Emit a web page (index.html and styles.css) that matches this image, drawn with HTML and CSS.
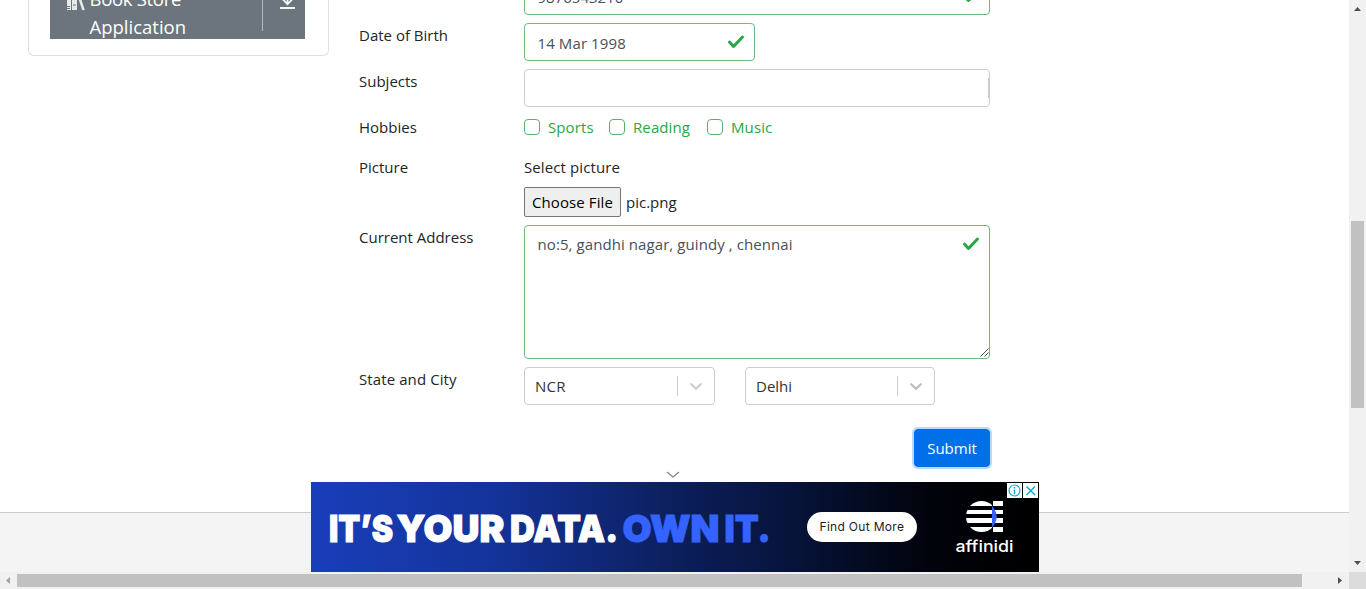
FILE: index.html
```html
<!DOCTYPE html>
<html lang="en">
<head>
<meta charset="utf-8">
<title>Practice Form</title>
<link rel="stylesheet" href="styles.css">
</head>
<body>
<div class="window">
  <div class="viewport">
    <main class="content">
      <aside class="sidebar">
        <div class="menu-item">
          <svg class="book-icon" width="19" height="24" viewBox="0 0 19 24"><path d="M1 2h4v19H1zM6 3h5v18H6z" fill="#e7e8ea"/><path d="M1 17.500h3M1 19.500h3M7 16h3M5.500 2v19" stroke="#6c757d"/><path d="M11 3l6 18M14 9l4 12" stroke="#e7e8ea" stroke-width="1.600"/></svg>
          <span class="menu-text"><span class="tight">Book Store</span> Application</span>
          <span class="menu-line"></span>
          <svg class="down-icon" width="17" height="24" viewBox="0 0 17 24"><path d="M8.500 5v12M3 11.500l5.500 5.700 5.500-5.700M1 21h15" fill="none" stroke="#f4f5f5" stroke-width="1.800"/></svg>
        </div>
      </aside>
      <form class="form">
        <div class="row"><span class="label"></span><div class="control valid"><span class="v-phone">9876543210</span><svg class="check" width="18" height="16" viewBox="0 0 18 16"><path d="M2.500 8l4 4.500L15.500 3" /></svg></div></div>
        <div class="row"><span class="label">Date of Birth</span><div class="control valid date"><span class="v-date">14 Mar 1998</span><svg class="check" width="18" height="16" viewBox="0 0 18 16"><path d="M2.500 8l4 4.500L15.500 3" /></svg></div></div>
        <div class="row"><span class="label">Subjects</span><div class="control subjects"><i class="cursor"></i></div></div>
        <div class="row hobbies"><span class="label">Hobbies</span><div class="checks"><label class="sports"><i class="box"></i><span>Sports</span></label><label class="reading"><i class="box"></i><span>Reading</span></label><label><i class="box"></i><span>Music</span></label></div></div>
        <div class="row"><span class="label">Picture</span><div class="upload"><span class="label wide">Select picture</span><div class="file"><span class="choose">Choose File</span><span class="file-name">pic.png</span></div></div></div>
        <div class="row"><span class="label">Current Address</span><div class="control valid address"><span class="v-address">no:5, gandhi nagar, guindy , chennai</span><svg class="check" width="18" height="16" viewBox="0 0 18 16"><path d="M2.500 8l4 4.500L15.500 3" /></svg><svg class="grip" width="9" height="9" viewBox="0 0 9 9"><path d="M.500 8.500l8-8M4.500 8.500l4-4" stroke="#555" stroke-width="1" fill="none"/></svg></div></div>
        <div class="row"><span class="label wide">State and City</span><div class="selects">
          <div class="select"><span class="ncr">NCR</span><i></i><svg width="12" height="8" viewBox="0 0 12 8"><path d="M1.200 1.200L6 5.800l4.800-4.600"/></svg></div>
          <div class="select"><span>Delhi</span><i></i><svg class="dim" width="12" height="8" viewBox="0 0 12 8"><path d="M1.200 1.200L6 5.800l4.800-4.600"/></svg></div>
        </div></div>
        <div class="actions"><button class="submit" type="button">Submit</button></div>
      </form>
    </main>
    <footer class="footer"></footer>
    <div class="ad">
      <svg class="collapse" width="14" height="8" viewBox="0 0 14 8"><path d="M1 1l6 5 6-5" fill="none" stroke="#858585" stroke-width="1.300"/></svg>
      <svg class="banner" width="728" height="90" viewBox="0 0 728 90">
        <defs>
          <linearGradient id="night"><stop offset="0" stop-color="#193eba"/><stop offset=".25" stop-color="#14339a"/><stop offset=".5" stop-color="#0c1f5d"/><stop offset=".7" stop-color="#051031"/><stop offset=".85" stop-color="#01030b"/><stop offset="1" stop-color="#000"/></linearGradient>
          <clipPath id="disc"><circle cx="670.500" cy="34.500" r="15.500"/></clipPath>
        </defs>
        <path d="M0 0h728v90H0z" fill="url(#night)"/>
        <g class="headline">
          <text x="18" y="59.500" textLength="64" lengthAdjust="spacingAndGlyphs">IT’S</text>
          <text x="85.500" y="59.500" textLength="108" lengthAdjust="spacingAndGlyphs">YOUR</text>
          <text x="199" y="59.500" textLength="108" lengthAdjust="spacingAndGlyphs">DATA.</text>
          <g class="own"><text x="311.500" y="59.500" textLength="97" lengthAdjust="spacingAndGlyphs">OWN</text>
          <text x="413.500" y="59.500" textLength="46" lengthAdjust="spacingAndGlyphs">IT.</text></g>
        </g>
        <rect x="496" y="30" width="110" height="30" rx="15" fill="#fff"/>
        <text class="more" x="508.500" y="49" textLength="84.500" lengthAdjust="spacing">Find Out More</text>
        <g fill="#fff"><g clip-path="url(#disc)"><path d="M650 19h31v5h-31zM650 28h31v4h-31zM650 36h31v5h-31zM650 45h31v5h-31z"/></g><path d="M682 19h10v5h-10zM682 28h10v4h-10zM682 36h10v5h-10zM682 45h10v5h-10z"/></g>
        <path d="M681 24q9.500 10.500 0 21.500z" fill="#3563ff"/>
        <text class="brand" x="644.500" y="70" textLength="58" lengthAdjust="spacingAndGlyphs">affinidi</text>
        <path d="M696 1h15v15h-15zM712 1h15v15h-15z" fill="#fff"/>
        <g fill="none" stroke="#08aed2" stroke-width="1.200"><circle cx="703.500" cy="8.500" r="5.500"/><path d="M703.500 7.500v4.500M703.500 5v1.500" stroke-width="1.500"/><path d="M715.500 4.500l8.500 8.500M724 4.500l-8.500 8.500" stroke-width="1.500"/></g>
      </svg>
    </div>
  </div>
  <div class="vbar"><svg width="7" height="4" viewBox="0 0 7 4"><path d="M0 4h7L3.500 0z" fill="#505050"/></svg><i></i><svg width="7" height="4" viewBox="0 0 7 4"><path d="M0 0h7L3.500 4z" fill="#505050"/></svg></div>
  <div class="hbar"><svg width="4" height="7" viewBox="0 0 4 7"><path d="M4 0v7L0 3.500z" fill="#a3a3a3"/></svg><i></i><svg width="4" height="7" viewBox="0 0 4 7"><path d="M0 0v7l4-3.500z" fill="#505050"/></svg></div>
  <div class="corner"></div>
</div>
</body>
</html>
```
FILE: styles.css
```css
* { box-sizing: border-box; }
body { margin: 0; overflow: hidden; background: #fff; color: #212529; font: 15px/24px "Open Sans", "Noto Sans", sans-serif; }
svg { display: block; flex: none; }
.window { display: grid; width: 1366px; height: 589px; grid-template: 572px 17px / 1349px 17px; }
.viewport { position: relative; display: flex; flex-direction: column; overflow: hidden; }
.content { display: flex; height: 512px; flex: none; align-items: flex-start; gap: 30px; padding-left: 28px; }
.sidebar { width: 301px; height: 76px; margin-top: -20px; padding: 0 23px 16px 21px; border: 1px solid #dfdfdf; border-top: 0; border-radius: 0 0 6px 6px; }
.menu-item { display: flex; height: 59px; padding: 4px 9px 0 16px; background: #6c757d; color: #fff; }
.book-icon { margin-top: 5px; }
.menu-text { width: 178px; margin: 1px 0 0 4.500px; padding-right: 50px; font-size: 18.500px; line-height: 28px; }
.tight { letter-spacing: -.3px; }
.menu-line { width: 1px; height: 47px; margin-right: 16px; background: #b6babe; margin-left: -4.500px; }
.down-icon { margin-top: 3px; }
.form { display: flex; width: 631px; margin-top: -23px; flex-direction: column; gap: 8px; }
.row { display: grid; grid-template-columns: 165px 466px; }
.label { white-space: nowrap; }
.wide { letter-spacing: .1px; }
.control { display: flex; position: relative; height: 38px; padding: 6px 9px 6px 12.500px; align-items: flex-start; justify-content: space-between; border: 1px solid #ccc; border-radius: 4px; color: #495057; white-space: nowrap; }
.valid { border-color: #6dba7e; }
.date { width: 231px; }
.v-phone, .v-date { padding-top: 1px; }
.v-date { letter-spacing: .1px; }
.v-address { letter-spacing: .08px; }
.check { margin-top: 4px; fill: none; stroke: #28a745; stroke-width: 3; stroke-linecap: round; stroke-linejoin: round; }
.subjects { justify-content: flex-end; padding-right: 0; }
.cursor { width: 1px; height: 20px; margin-top: 2px; background: #ccc; }
.hobbies { height: 32px; }
.checks { display: flex; gap: 16px; color: #28a745; letter-spacing: .1px; }
.checks label { display: flex; gap: 8px; }
.checks .sports { width: 69px; }
.checks .reading { width: 82px; }
.box { flex: none; width: 16px; height: 16px; margin-top: 4px; border: 1px solid #58b26e; border-radius: 4px; }
.upload { display: flex; flex-direction: column; gap: 8px; }
.file { display: flex; height: 30px; gap: 5px; line-height: 30px; }
.choose { width: 97px; border: 1px solid #767676; border-radius: 2px; background: #efefef; color: #000; line-height: 29px; text-align: center; letter-spacing: .1px; }
.address { height: 134px; }
.grip { position: absolute; right: 0; bottom: 1px; }
.selects { display: flex; gap: 30px; }
.select { display: flex; width: 191px; height: 38px; padding-left: 10px; align-items: center; border: 1px solid #ccc; border-radius: 4px; color: #333; }
.select + .select { width: 190px; }
.select span { flex: 1; }
.select .ncr { letter-spacing: .3px; }
.select i { width: 1px; height: 20px; margin-right: 12px; background: #ccc; }
.select svg { margin: 1px 12px 0 0; fill: none; stroke: #ccc; stroke-width: 2.200; stroke-linecap: round; }
.select .dim { stroke: #bdbdbd; }
.actions { display: flex; margin-top: 16px; justify-content: flex-end; }
.submit { width: 76px; height: 38px; padding: 0; border: 1px solid #006fe6; border-radius: 4px; background: #0070e8; box-shadow: 0 0 0 2px #b8d9fb; color: #fff; font: inherit; }
.footer { height: 60px; border-top: 1px solid #ccc; background: #f4f4f4; }
.ad { position: absolute; left: 311px; top: 470px; width: 728px; }
.collapse { margin: 1px 0 3px 355px; }
.banner text { font-family: Inter, "Open Sans", sans-serif; }
.banner .headline text { fill: #fff; stroke: #fff; stroke-width: 1; font-size: 37.500px; font-weight: 900; }
.banner .headline .own text { fill: #3563ff; stroke: #3563ff; }
.banner .more { fill: #1c1c1c; font-size: 12px; }
.banner .brand { fill: #fff; font-size: 16.500px; font-weight: 500; font-variant-ligatures: none; }
.vbar { display: flex; padding: 7px 0; flex-direction: column; align-items: center; justify-content: space-between; background: #f1f1f1; }
.vbar i { width: 13px; height: 187px; margin-top: 57px; background: #c1c1c1; }
.hbar { display: flex; padding: 0 7px 0 6px; align-items: center; justify-content: space-between; background: #f1f1f1; }
.hbar i { width: 1285px; height: 13px; margin-right: 30px; background: #c1c1c1; }
.corner { background: #dcdcdc; }
```
